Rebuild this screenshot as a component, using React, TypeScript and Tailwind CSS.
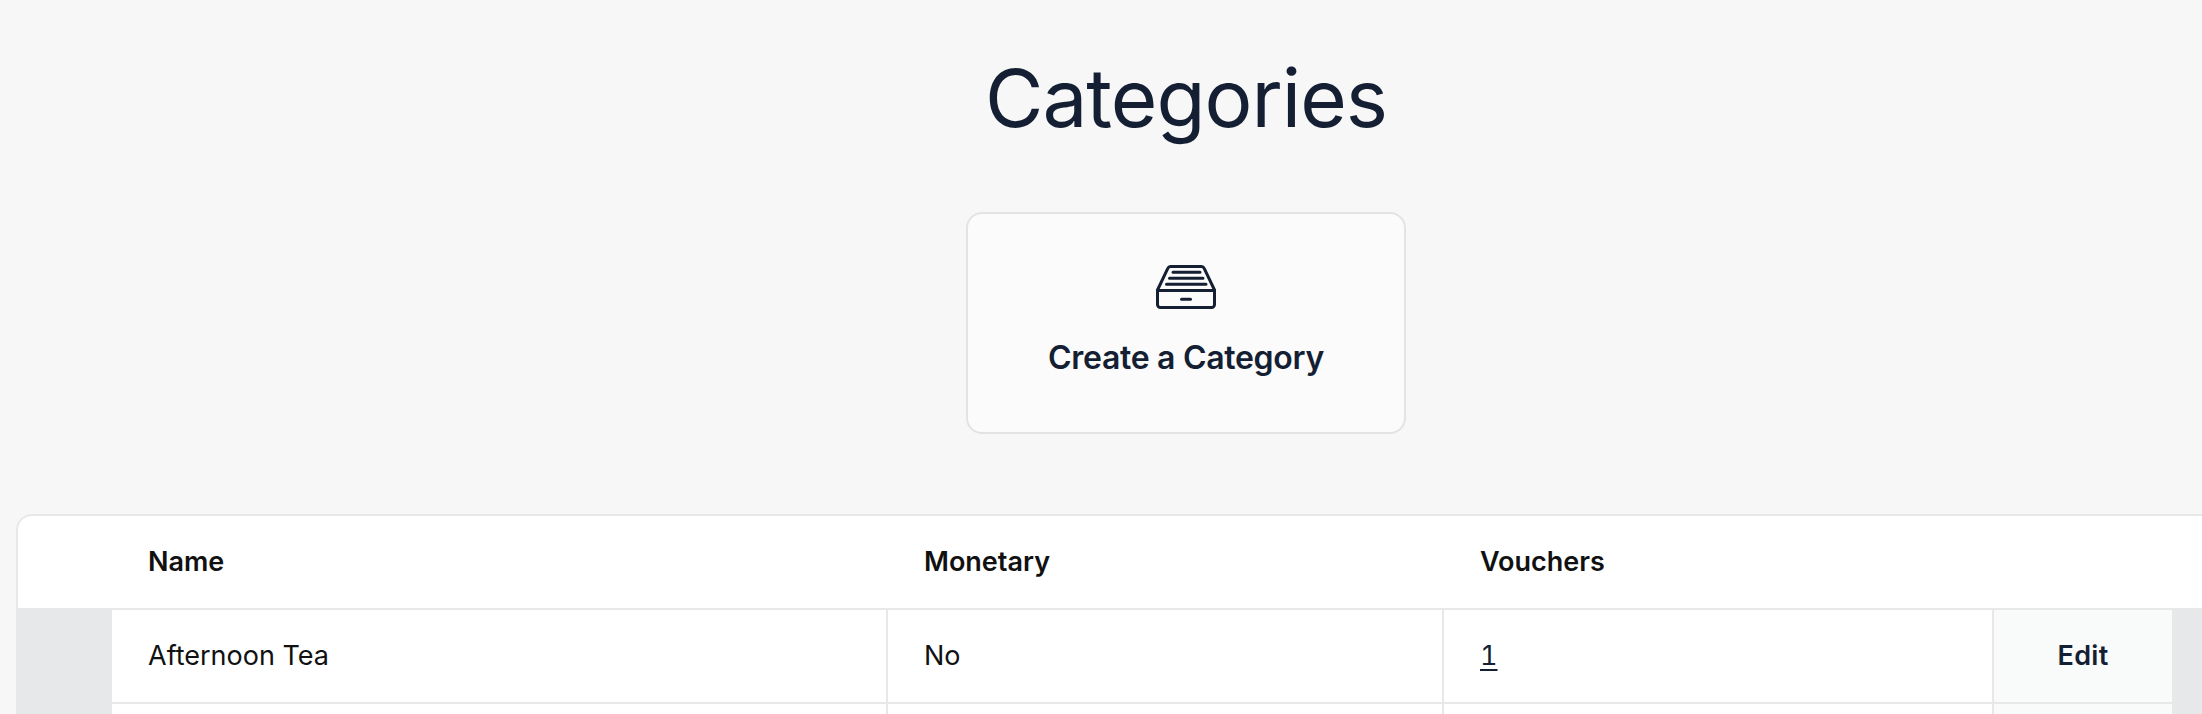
const Drawer = () => (
  <svg width="60" height="44" viewBox="0 0 60 44" fill="none" stroke="#141f33" strokeWidth="3" strokeLinecap="round" strokeLinejoin="round">
    <path d="M14.500 1.500H45.500a3 3 0 0 1 2.700 1.800L58.500 25V39.500a3 3 0 0 1-3 3H4.500a3 3 0 0 1-3-3V25L11.800 3.300A3 3 0 0 1 14.500 1.500Z" />
    <path d="M1.500 25.500H58.500" />
    <path d="M17 7.300H44M13.500 13.300H47M10.500 19.300H50" />
    <path d="M25.500 34.300H34.500" />
  </svg>
);

const rowGrid = 'grid grid-cols-[94px_776px_556px_550px_178px_96px]';

const Cell = ({ children }: { children?: React.ReactNode }) => (
  <div className="flex items-center border-r-2 border-b-2 border-[#e8e8e8] bg-white pl-9">{children}</div>
);

const Row = ({ name, monetary, vouchers }: { name?: string; monetary?: string; vouchers?: string }) => (
  <div className={`${rowGrid} h-[94px] text-[27px] text-[#111]`}>
    <div className="bg-[#e7e8ea]" />
    <Cell>{name}</Cell>
    <Cell>{monetary}</Cell>
    <Cell>
      {vouchers && <a className="text-[#141f33] tabular-nums underline underline-offset-4">{vouchers}</a>}
    </Cell>
    <div className="flex items-center justify-center border-b-2 border-[#e8e8e8] bg-[#f9fafa] font-semibold tracking-[0.3px] text-[#141f33]">
      {name && 'Edit'}
    </div>
    <div className="bg-[#e7e8ea]" />
  </div>
);

export default function App() {
  return (
    <div className="h-[714px] w-full overflow-hidden bg-[#f7f7f7] font-['Inter',sans-serif]">
      <div className="ml-4 w-[2340px]">
        <h1 className="pt-[48px] text-center text-[80px] leading-[100px] font-normal tracking-[-1px] text-[#141f33]">Categories</h1>
        <a className="mx-auto mt-[64px] flex h-[222px] w-[440px] flex-col items-center rounded-[16px] border-2 border-[#e3e3e3] bg-[#fbfbfb] pt-[51px] text-[#141f33]">
          <Drawer />
          <span className="mt-[29px] text-[32px] leading-[40px] font-semibold tracking-[-0.3px]">Create a Category</span>
        </a>
        <div className="mt-[80px] overflow-hidden rounded-tl-[16px] rounded-tr-[16px] border-2 border-b-0 border-[#e8e8e8] bg-white">
          <div className={`${rowGrid} h-[94px] border-b-2 border-[#e8e8e8] text-[27px] font-semibold text-[#111]`}>
            <div />
            <div className="flex items-center pl-9">Name</div>
            <div className="flex items-center pl-9">Monetary</div>
            <div className="flex items-center pl-9">Vouchers</div>
            <div />
            <div />
          </div>
          <Row name="Afternoon Tea" monetary="No" vouchers="1" />
          <Row />
        </div>
      </div>
    </div>
  );
}
